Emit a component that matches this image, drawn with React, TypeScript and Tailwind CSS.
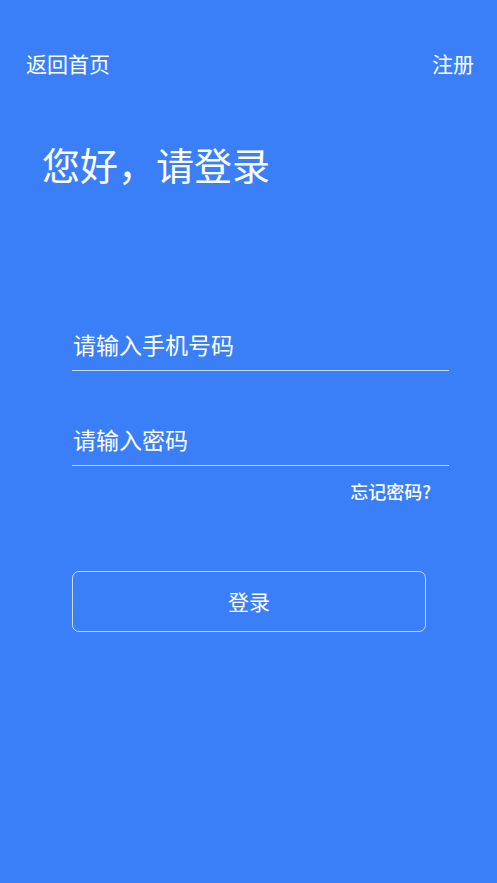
import React from "react";

export default function App() {
  const font = { fontFamily: '"Noto Sans CJK SC", "Noto Sans", sans-serif' };
  return (
    <div className="w-full min-h-[883px] bg-[#3b7ff8] text-white flex flex-col" style={font}>
      <div className="flex justify-between items-center pt-[48px] pl-[26px] pr-[23px] h-[78px]">
        <span className="text-[21px] leading-[30px]">返回首页</span>
        <span className="text-[21px] leading-[30px]">注册</span>
      </div>
      <h1 className="mt-[67px] ml-[42px] text-[38px] leading-[38px] font-normal">您好，请登录</h1>
      <div className="mt-[146px] ml-[72px] w-[377px] flex flex-col">
        <div className="border-b border-white/70 pb-[11px]">
          <input
            className="w-full bg-transparent outline-none text-[23px] leading-[30px] h-[30px] pl-[1px] text-white placeholder:text-white"
            placeholder="请输入手机号码"
            style={font}
          />
        </div>
        <div className="mt-[53px] border-b border-white/70 pb-[11px]">
          <input
            type="password"
            className="w-full bg-transparent outline-none text-[23px] leading-[30px] h-[30px] pl-[1px] text-white placeholder:text-white"
            placeholder="请输入密码"
            style={font}
          />
        </div>
        <div className="mt-[13px] flex justify-end pr-[18px]">
          <span className="text-[18px] leading-[24px] font-medium">忘记密码?</span>
        </div>
      </div>
      <button
        className="mt-[68px] ml-[72px] w-[354px] h-[61px] rounded-[7px] border-[1.5px] border-white/70 bg-transparent text-white text-[21px] flex items-center justify-center"
        style={font}
      >
        登录
      </button>
    </div>
  );
}
